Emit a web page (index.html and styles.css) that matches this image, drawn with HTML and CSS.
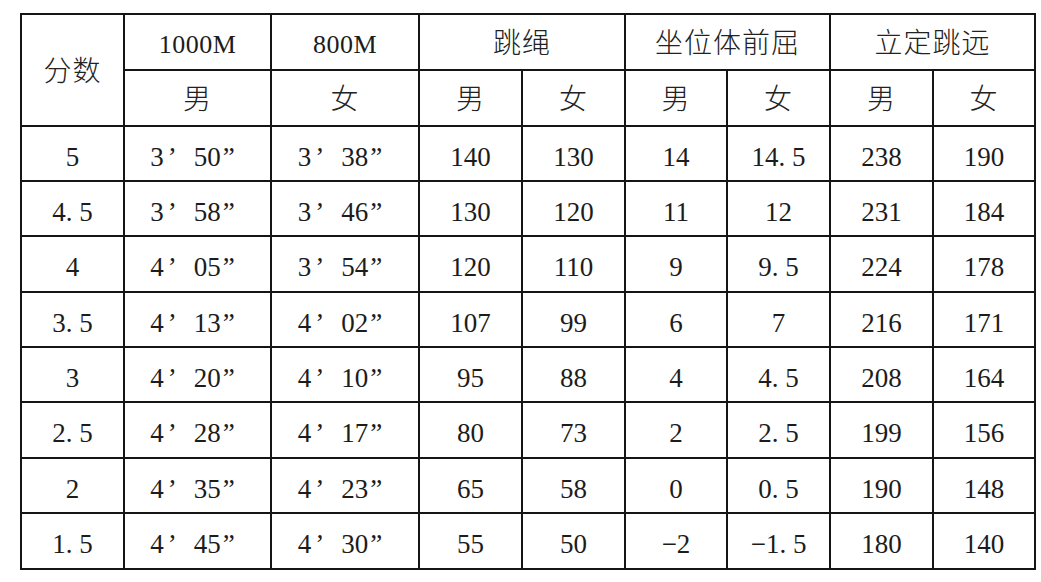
FILE: index.html
```html
<!DOCTYPE html>
<html lang="zh-CN">
<head>
<meta charset="utf-8">
<title>体育评分标准</title>
<link rel="stylesheet" href="styles.css">
</head>
<body>
<table class="score">
  <colgroup>
    <col class="c-score"><col class="c-wide"><col class="c-wide2">
    <col class="c-n"><col class="c-n"><col class="c-n2"><col class="c-n"><col class="c-n"><col class="c-n2">
  </colgroup>
  <thead>
    <tr class="h1">
      <th rowspan="2" class="zh">分数</th>
      <th class="lat">1000M</th>
      <th class="lat">800M</th>
      <th colspan="2" class="zh">跳绳</th>
      <th colspan="2" class="zh">坐位体前屈</th>
      <th colspan="2" class="zh">立定跳远</th>
    </tr>
    <tr class="h2">
      <th class="zh">男</th><th class="zh">女</th>
      <th class="zh">男</th><th class="zh">女</th>
      <th class="zh">男</th><th class="zh">女</th>
      <th class="zh">男</th><th class="zh">女</th>
    </tr>
  </thead>
  <tbody>
    <tr><td>5</td><td>3<span class="mn">’</span>50<span class="sc">”</span></td><td>3<span class="mn">’</span>38<span class="sc">”</span></td><td>140</td><td>130</td><td>14</td><td>14<span class="pt">.</span>5</td><td>238</td><td>190</td></tr>
    <tr><td>4<span class="pt">.</span>5</td><td>3<span class="mn">’</span>58<span class="sc">”</span></td><td>3<span class="mn">’</span>46<span class="sc">”</span></td><td>130</td><td>120</td><td>11</td><td>12</td><td>231</td><td>184</td></tr>
    <tr class="tall"><td>4</td><td>4<span class="mn">’</span>05<span class="sc">”</span></td><td>3<span class="mn">’</span>54<span class="sc">”</span></td><td>120</td><td>110</td><td>9</td><td>9<span class="pt">.</span>5</td><td>224</td><td>178</td></tr>
    <tr><td>3<span class="pt">.</span>5</td><td>4<span class="mn">’</span>13<span class="sc">”</span></td><td>4<span class="mn">’</span>02<span class="sc">”</span></td><td>107</td><td>99</td><td>6</td><td>7</td><td>216</td><td>171</td></tr>
    <tr><td>3</td><td>4<span class="mn">’</span>20<span class="sc">”</span></td><td>4<span class="mn">’</span>10<span class="sc">”</span></td><td>95</td><td>88</td><td>4</td><td>4<span class="pt">.</span>5</td><td>208</td><td>164</td></tr>
    <tr class="tall"><td>2<span class="pt">.</span>5</td><td>4<span class="mn">’</span>28<span class="sc">”</span></td><td>4<span class="mn">’</span>17<span class="sc">”</span></td><td>80</td><td>73</td><td>2</td><td>2<span class="pt">.</span>5</td><td>199</td><td>156</td></tr>
    <tr><td>2</td><td>4<span class="mn">’</span>35<span class="sc">”</span></td><td>4<span class="mn">’</span>23<span class="sc">”</span></td><td>65</td><td>58</td><td>0</td><td>0<span class="pt">.</span>5</td><td>190</td><td>148</td></tr>
    <tr class="tall"><td>1<span class="pt">.</span>5</td><td>4<span class="mn">’</span>45<span class="sc">”</span></td><td>4<span class="mn">’</span>30<span class="sc">”</span></td><td>55</td><td>50</td><td>−2</td><td>−1<span class="pt">.</span>5</td><td>180</td><td>140</td></tr>
  </tbody>
</table>
</body>
</html>
```
FILE: styles.css
```css
html, body {
  margin: 0;
  padding: 0;
  background: #ffffff;
}

body {
  padding: 13px 0 0 20px;
  color: #1c1c1c;
  font-family: "Liberation Serif", "Noto Sans CJK SC", serif;
}

.score {
  border-collapse: collapse;
  table-layout: fixed;
  width: 1014px;
}

.c-score { width: 103px; }
.c-wide { width: 147px; }
.c-wide2 { width: 148px; }
.c-n { width: 103px; }
.c-n2 { width: 102px; }

.score th,
.score td {
  box-sizing: border-box;
  border: 2px solid #151515;
  text-align: center;
  vertical-align: middle;
  padding: 0;
  font-weight: normal;
  white-space: nowrap;
  overflow: hidden;
  line-height: 30px;
}

.score .h1 th,
.score .h2 th {
  height: 56px;
}

.score th.zh {
  font-family: "Noto Sans CJK SC", sans-serif;
  font-size: 28px;
  letter-spacing: 1px;
  font-weight: 300;
  color: #222;
  padding-bottom: 3px;
}

.score th.lat {
  font-size: 26px;
  padding-top: 5px;
  letter-spacing: 0.5px;
}

.score td {
  height: 55px;
  font-size: 27px;
  padding-top: 6px;
}

.score tr.tall td {
  height: 56px;
}

.score .mn,
.score .sc {
  display: inline-block;
  text-align: left;
  font-family: "Liberation Serif", serif;
  font-size: 27px;
  line-height: 20px;
}

.score .mn {
  width: 30px;
  padding-left: 4px;
  box-sizing: border-box;
}

.score .sc {
  width: 24px;
  padding-left: 2px;
  box-sizing: border-box;
}

.score .pt {
  display: inline-block;
  width: 0.5em;
  text-align: left;
}
```
